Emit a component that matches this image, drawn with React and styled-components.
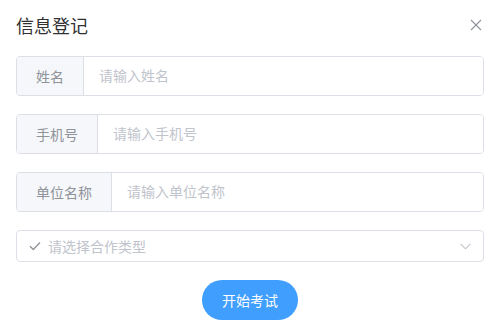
import React from "react";
import styled, { createGlobalStyle } from "styled-components";

const GlobalStyle = createGlobalStyle`
  html, body {
    margin: 0;
    padding: 0;
    background: #fff;
  }
  * {
    box-sizing: border-box;
  }
  body {
    font-family: "Liberation Sans", "Noto Sans CJK SC", sans-serif;
  }
`;

const Dialog = styled.div`
  width: 500px;
  height: 336px;
  background: #fff;
  border-radius: 4px;
  overflow: hidden;
`;

const Header = styled.div`
  display: flex;
  align-items: center;
  justify-content: space-between;
  padding: 14px 16px 0 16px;
  height: 40px;
`;

const Title = styled.div`
  font-size: 18px;
  color: #303133;
  line-height: 26px;
`;

const CloseButton = styled.button`
  border: none;
  background: none;
  padding: 0;
  width: 16px;
  height: 16px;
  display: flex;
  align-items: center;
  justify-content: center;
  color: #909399;
  cursor: pointer;
  margin-top: -4px;
`;

const Body = styled.div`
  padding: 16px 16px 0 16px;
  display: flex;
  flex-direction: column;
`;

const InputGroup = styled.div`
  display: flex;
  height: 40px;
  border: 1px solid #dcdfe6;
  border-radius: 4px;
  overflow: hidden;
  margin-bottom: 18px;
`;

const Prepend = styled.div`
  background: #f5f7fa;
  color: #909399;
  font-size: 14px;
  padding: 0 19px;
  display: flex;
  align-items: center;
  border-right: 1px solid #dcdfe6;
  white-space: nowrap;
`;

const Input = styled.input`
  flex: 1;
  border: none;
  outline: none;
  padding: 0 15px;
  font-size: 14px;
  font-family: inherit;
  color: #606266;
  &::placeholder {
    color: #c0c4cc;
  }
`;

const Select = styled.div`
  display: flex;
  align-items: center;
  height: 32px;
  border: 1px solid #dcdfe6;
  border-radius: 4px;
  padding: 0 12px 0 12px;
  margin-top: 0;
`;

const SelectText = styled.span`
  flex: 1;
  font-size: 14px;
  color: #c0c4cc;
  margin-left: 7px;
`;

const Footer = styled.div`
  display: flex;
  justify-content: center;
  padding-top: 18px;
`;

const PrimaryButton = styled.button`
  width: 96px;
  height: 40px;
  border: none;
  border-radius: 20px;
  background: #409eff;
  color: #fff;
  font-size: 14px;
  font-family: inherit;
  cursor: pointer;
`;

const fields = [
  { label: "姓名", placeholder: "请输入姓名" },
  { label: "手机号", placeholder: "请输入手机号" },
  { label: "单位名称", placeholder: "请输入单位名称" },
];

export default function App() {
  return (
    <Dialog>
      <GlobalStyle />
      <Header>
        <Title>信息登记</Title>
        <CloseButton>
          <svg width="12" height="12" viewBox="0 0 12 12">
            <path d="M1 1L11 11M11 1L1 11" stroke="#909399" strokeWidth="1.1" fill="none" />
          </svg>
        </CloseButton>
      </Header>
      <Body>
        {fields.map((f) => (
          <InputGroup key={f.label}>
            <Prepend>{f.label}</Prepend>
            <Input placeholder={f.placeholder} />
          </InputGroup>
        ))}
        <Select>
          <svg width="12" height="10" viewBox="0 0 12 10">
            <path d="M1 5.2L4.3 8.5L11 1.5" stroke="#909399" strokeWidth="1.3" fill="none" />
          </svg>
          <SelectText>请选择合作类型</SelectText>
          <svg width="11" height="7" viewBox="0 0 11 7">
            <path d="M0.5 0.8L5.5 5.8L10.5 0.8" stroke="#c0c4cc" strokeWidth="1.1" fill="none" />
          </svg>
        </Select>
        <Footer>
          <PrimaryButton>开始考试</PrimaryButton>
        </Footer>
      </Body>
    </Dialog>
  );
}
